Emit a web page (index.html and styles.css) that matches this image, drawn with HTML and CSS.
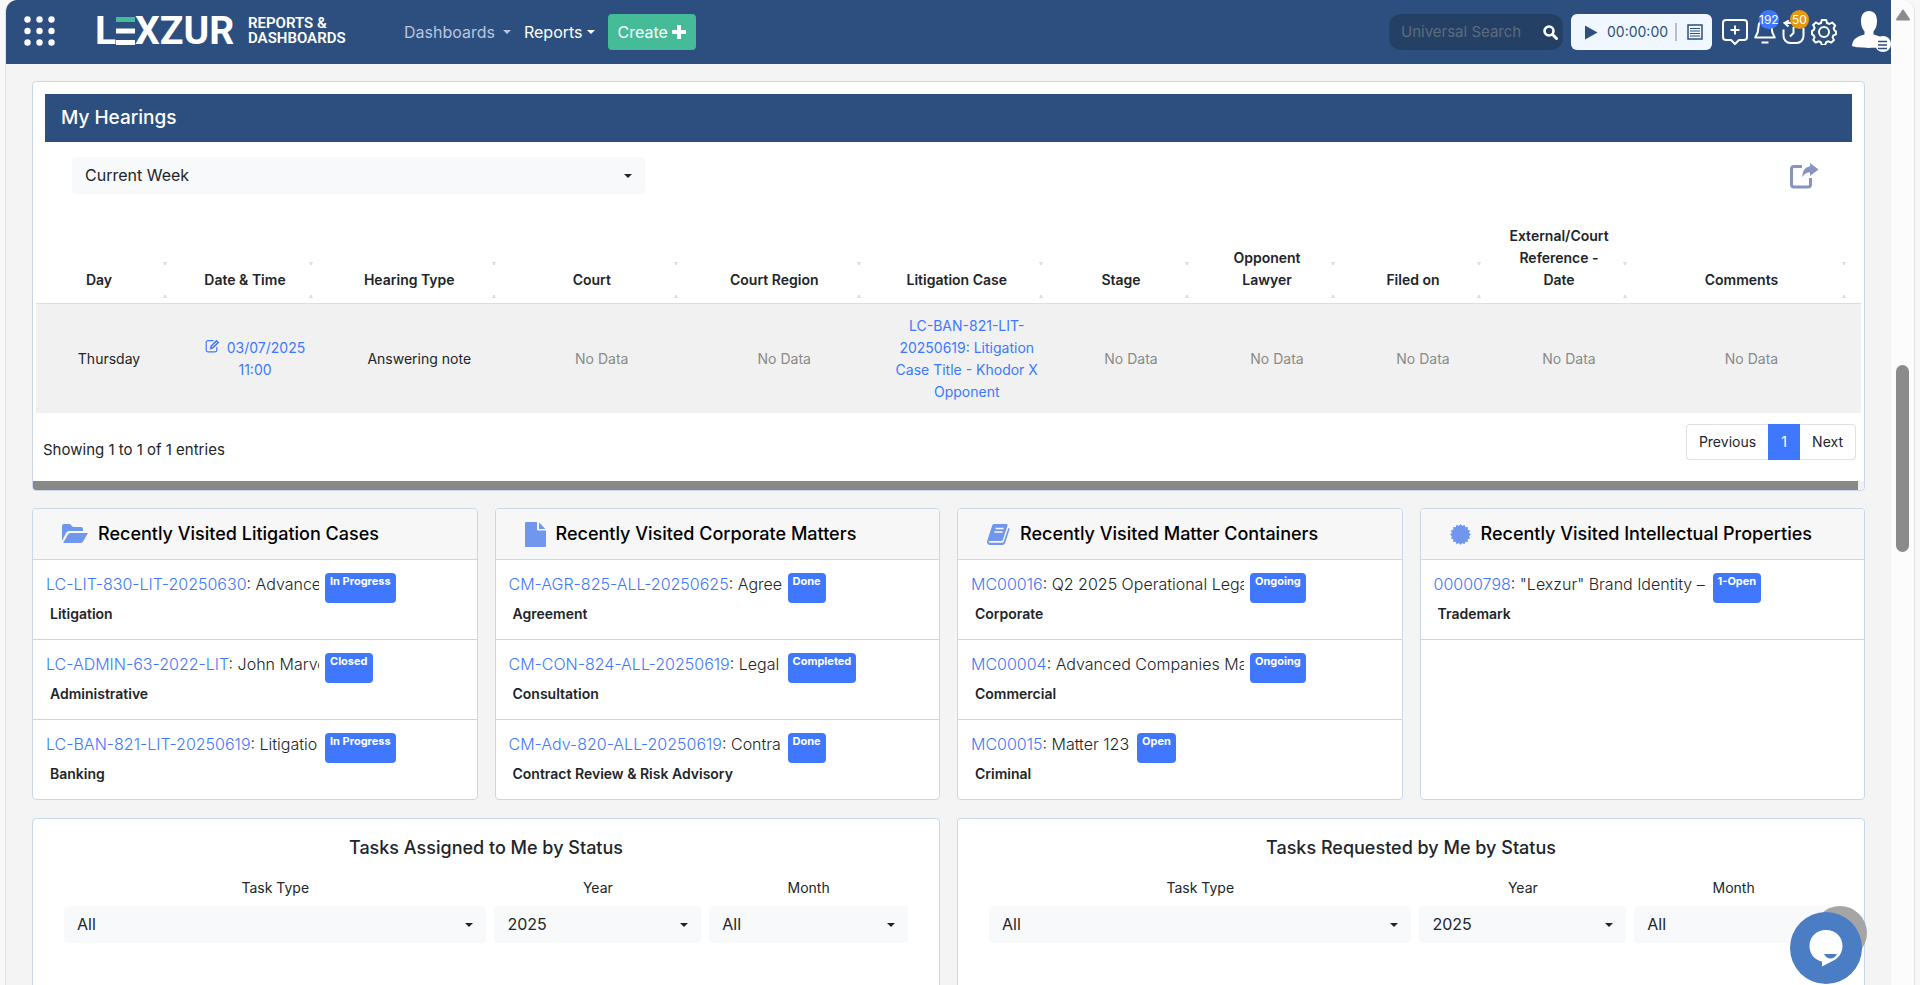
FILE: index.html
```html
<!DOCTYPE html>
<html lang="en">
<head>
<meta charset="utf-8">
<title>Lexzur - Reports &amp; Dashboards</title>
<link rel="stylesheet" href="styles.css">
</head>
<body>
<div class="shell">
  <div class="page">
    <header class="topbar">
      <button class="icon-btn apps" aria-label="Applications">
        <svg width="31" height="30" viewBox="0 0 31 30" fill="#fff"><circle cx="3.500" cy="3.500" r="3.200"/><circle cx="15.500" cy="3.500" r="3.200"/><circle cx="27.500" cy="3.500" r="3.200"/><circle cx="3.500" cy="15" r="3.200"/><circle cx="15.500" cy="15" r="3.200"/><circle cx="27.500" cy="15" r="3.200"/><circle cx="3.500" cy="26.500" r="3.200"/><circle cx="15.500" cy="26.500" r="3.200"/><circle cx="27.500" cy="26.500" r="3.200"/></svg>
      </button>
      <a class="brand" href="#" aria-label="Lexzur">
        <span>L</span>
        <svg width="19" height="28" viewBox="0 0 19 28"><path fill="#46bb97" d="M0 0h19v5H0z"/><path fill="#fff" d="M0 11.500h19v5H0zM0 23h19v5H0z"/></svg>
        <span>XZUR</span>
      </a>
      <div class="product">REPORTS &amp;<br>DASHBOARDS</div>
      <nav class="nav">
        <a class="nav-link muted" href="#">Dashboards <i class="caret"></i></a>
        <a class="nav-link" href="#">Reports<i class="caret"></i></a>
        <button class="create">Create <svg width="14" height="14" viewBox="0 0 14 14"><path d="M7 0v14M0 7h14" stroke="#fff" stroke-width="4"/></svg></button>
      </nav>
      <div class="tools">
        <div class="search">
          <input type="text" placeholder="Universal Search" aria-label="Universal Search">
          <button class="icon-btn" aria-label="Search"><svg width="15" height="15" viewBox="0 0 15 15" fill="none" stroke="#fff"><circle cx="6" cy="6" r="4.500" stroke-width="2.600"/><path d="M9.500 9.500l4 4" stroke-width="3" stroke-linecap="round"/></svg></button>
        </div>
        <div class="timer">
          <button class="icon-btn" aria-label="Start timer"><svg width="14" height="15" viewBox="0 0 14 15"><path d="M1 .5l12.500 7L1 14.500z" fill="#2d4f80"/></svg></button>
          <span class="time">00:00:00</span>
          <span class="divider"></span>
          <button class="icon-btn" aria-label="Time logs"><svg width="16" height="16" viewBox="0 0 16 16" fill="none" stroke="#2d4f80"><path d="M1 1h14v14H1z" stroke-width="1.500"/><path d="M3 4.500h10M3 7h10M3 9.500h10M3 12h10" stroke-width="1.200"/></svg></button>
        </div>
        <div class="actions">
          <button class="icon-btn" aria-label="Add"><svg width="26" height="26" viewBox="0 0 26 26" fill="none" stroke="#fff" stroke-width="2" stroke-linejoin="round"><path d="M4 1h18a3 3 0 0 1 3 3v14a3 3 0 0 1-3 3h-5l-4 4-4-4H4a3 3 0 0 1-3-3V4a3 3 0 0 1 3-3z"/><path d="M13 6.500v9M8.500 11h9"/></svg></button>
          <button class="icon-btn badged" aria-label="Notifications"><svg width="22" height="26" viewBox="0 0 22 26" fill="none" stroke="#fff" stroke-width="2" stroke-linejoin="round"><path d="M11 1C7 1 4.500 4 4.500 8c0 5-1 7-3.300 10.500h19.600C18.500 15 17.500 13 17.500 8c0-4-2.500-7-6.500-7z"/><path d="M7.500 23.500h7"/></svg><span class="count">192</span></button>
          <button class="icon-btn badged" aria-label="Reminders"><svg width="23" height="26" viewBox="0 0 23 26" fill="none" stroke="#fff" stroke-width="2"><path d="M1.500 10.500v6.500a7 7 0 0 0 7 7h6a7 7 0 0 0 7-7V9"/><path d="M11.500 8v6l-3.500 3.500M7 1.500L2.500 4l4 3.500M2.500 4h7"/></svg><span class="count amber">50</span></button>
          <button class="icon-btn" aria-label="Settings"><svg width="26" height="26" viewBox="0 0 26 26" fill="none" stroke="#fff" stroke-width="2" stroke-linejoin="round"><path d="M10.800 1h4.400l.8 3 2.500 1 2.700-1.500 3 3L22.700 9.300l.9 2.400 1.400.7v3l-2.600 1 -.8 2 1.400 2.700-2.700 2.500-2.800-1.300-2.300.9-1 2.700h-3.400l-1-2.700-2.300-.9-2.800 1.300L2.300 21l1.300-2.700-.9-2L1 15.300v-3.500l1.700-.8.9-2.200L2.100 6l2.800-2.600L7.500 5 10 4z"/><circle cx="13" cy="13" r="5"/></svg></button>
          <button class="icon-btn avatar" aria-label="Account"><svg width="39" height="42" viewBox="0 0 39 42"><path fill="#fff" d="M17 0c5 0 8 3.500 8 10 0 5-1.500 8-3.500 10.500v3c7 2 12 4 12.500 11.500-6 2.500-28 2.500-34 0C.5 27.500 5.500 25.500 12.500 23.500v-3C10.500 18 9 15 9 10 9 3.500 12 0 17 0z"/><circle cx="31" cy="33" r="8" fill="#fff"/><path d="M26 30.500h9M26 34h9M26 37.500h9" stroke="#2d4f80" stroke-width="1.300"/></svg></button>
        </div>
      </div>
    </header>

    <main class="content">
      <section class="card hearings">
        <h2 class="banner">My Hearings</h2>
        <div class="filter-row">
          <div class="select wide"><select aria-label="Period"><option>Current Week</option></select></div>
          <button class="icon-btn" aria-label="Export"><svg width="29" height="26" viewBox="0 0 29 26"><path d="M12 3.500H4a2.500 2.500 0 0 0-2.500 2.500V21.500A2.500 2.500 0 0 0 4 24h14a2.500 2.500 0 0 0 2.500-2.500v-6.500" fill="none" stroke="#8794bf" stroke-width="3"/><path d="M20 0l8.500 6.500L20 13V9.500c-4 0-6 1.500-7.500 5C12 8 15 4 20 3.500z" fill="#8794bf"/></svg></button>
        </div>
        <table class="grid">
          <colgroup><col class="w8"><col class="w8"><col class="w10"><col class="w10"><col class="w10"><col class="w10"><col class="w8"><col class="w8"><col class="w8"><col class="w8"><col class="w12"></colgroup>
          <thead><tr><th>Day</th><th>Date &amp; Time</th><th>Hearing Type</th><th>Court</th><th>Court Region</th><th>Litigation Case</th><th>Stage</th><th>Opponent Lawyer</th><th>Filed on</th><th>External/Court Reference - Date</th><th>Comments</th></tr></thead>
          <tbody><tr>
            <td class="strong">Thursday</td>
            <td><a href="#"><svg class="edit" width="14" height="14" viewBox="0 0 14 14" fill="none" stroke="#3f78ff"><path d="M8.500 1.700H3A1.800 1.800 0 0 0 1.200 3.500V11A1.800 1.800 0 0 0 3 12.800h7A1.800 1.800 0 0 0 11.800 11V8" stroke-width="1.200"/><path d="M5.800 9.500l.4-2.300 5.300-5.400 1.700 1.700-5.300 5.300z" stroke-width="1.500"/></svg>03/07/2025 11:00</a></td>
            <td class="strong">Answering note</td><td>No Data</td><td>No Data</td>
            <td><a href="#">LC-BAN-821-LIT-20250619: Litigation Case Title - Khodor X Opponent</a></td>
            <td>No Data</td><td>No Data</td><td>No Data</td><td>No Data</td><td>No Data</td>
          </tr></tbody>
        </table>
        <div class="table-foot">
          <span class="info">Showing 1 to 1 of 1 entries</span>
          <div class="pager"><button>Previous</button><button class="current">1</button><button>Next</button></div>
        </div>
        <div class="hscroll"><div class="hthumb"></div></div>
      </section>

      <div class="recent">
        <section class="card">
          <h3 class="card-head"><svg width="26" height="20" viewBox="0 0 26 20" fill="#7096ee"><path d="M0 17V2a2 2 0 0 1 2-2h6l3 3h8a2 2 0 0 1 2 2v2H8c-2 0-3 .6-4 2z"/><path d="M1 19l5-8.500A3 3 0 0 1 8.500 9H26l-5 8.500a3 3 0 0 1-2.500 1.500z"/></svg>Recently Visited Litigation Cases</h3>
          <div class="item"><div class="line"><span class="name"><a href="#">LC-LIT-830-LIT-20250630</a>: Advance</span><span class="tag">In Progress</span></div><div class="kind">Litigation</div></div>
          <div class="item"><div class="line"><span class="name"><a href="#">LC-ADMIN-63-2022-LIT</a>: John Marve</span><span class="tag">Closed</span></div><div class="kind">Administrative</div></div>
          <div class="item"><div class="line"><span class="name"><a href="#">LC-BAN-821-LIT-20250619</a>: Litigatio</span><span class="tag">In Progress</span></div><div class="kind">Banking</div></div>
        </section>
        <section class="card">
          <h3 class="card-head"><svg width="21" height="25" viewBox="0 0 21 25" fill="#7096ee"><path d="M0 1a1 1 0 0 1 1-1h11v7.500a1 1 0 0 0 1 1h8V24a1 1 0 0 1-1 1H1a1 1 0 0 1-1-1z"/><path d="M14 .5L20.500 7H14z"/></svg>Recently Visited Corporate Matters</h3>
          <div class="item"><div class="line"><span class="name"><a href="#">CM-AGR-825-ALL-20250625</a>: Agreem</span><span class="tag">Done</span></div><div class="kind">Agreement</div></div>
          <div class="item"><div class="line"><span class="name"><a href="#">CM-CON-824-ALL-20250619</a>: Legal</span><span class="tag">Completed</span></div><div class="kind">Consultation</div></div>
          <div class="item"><div class="line"><span class="name"><a href="#">CM-Adv-820-ALL-20250619</a>: Contra</span><span class="tag">Done</span></div><div class="kind">Contract Review &amp; Risk Advisory</div></div>
        </section>
        <section class="card">
          <h3 class="card-head"><svg width="23" height="21" viewBox="0 0 23 21"><path fill="#7096ee" d="M7.500 0H19a1.500 1.500 0 0 1 1.400 2L16 15.500a2 2 0 0 1-2 1.500H3c-1 0-1.500.5-1.300 1 .2.600.8.800 1.500.800h12c.8 0 1.300-.4 1.600-1.200L21.300 4c1.200.3 1.400 1 1 2l-4 12.500c-.5 1.600-1.500 2.500-3 2.500H3c-2 0-3.500-1.800-2.800-4L5 2C5.400.6 6.200 0 7.500 0z"/><path d="M8.500 4.500h8M7.500 8h8" stroke="#f7f7f7" stroke-width="1.300"/></svg>Recently Visited Matter Containers</h3>
          <div class="item"><div class="line"><span class="name"><a href="#">MC00016</a>: Q2 2025 Operational Lega</span><span class="tag">Ongoing</span></div><div class="kind">Corporate</div></div>
          <div class="item"><div class="line"><span class="name"><a href="#">MC00004</a>: Advanced Companies Ma</span><span class="tag">Ongoing</span></div><div class="kind">Commercial</div></div>
          <div class="item"><div class="line"><span class="name short"><a href="#">MC00015</a>: Matter 123</span><span class="tag">Open</span></div><div class="kind">Criminal</div></div>
        </section>
        <section class="card">
          <h3 class="card-head"><svg width="21" height="21" viewBox="-10.500 -10.500 21 21" fill="#7096ee"><path d="M0-10.500L1.700-8.500L4-9.700L4.800-7.200L7.400-7.400L7.200-4.800L9.700-4L8.500-1.700L10.500 0L8.500 1.700L9.700 4L7.200 4.800L7.400 7.400L4.800 7.200L4 9.700L1.700 8.500L0 10.500L-1.700 8.500L-4 9.700L-4.800 7.200L-7.400 7.400L-7.200 4.800L-9.700 4L-8.500 1.700L-10.500 0L-8.500-1.700L-9.700-4L-7.200-4.800L-7.400-7.400L-4.800-7.200L-4-9.700L-1.700-8.500z"/></svg>Recently Visited Intellectual Properties</h3>
          <div class="item ruled"><div class="line"><span class="name"><a href="#">00000798</a>: "Lexzur" Brand Identity –</span><span class="tag">1-Open</span></div><div class="kind">Trademark</div></div>
        </section>
      </div>

      <div class="charts">
        <section class="card chart">
          <h3>Tasks Assigned to Me by Status</h3>
          <div class="filters">
            <label>Task Type<span class="select"><select><option>All</option></select></span></label>
            <label>Year<span class="select"><select><option>2025</option></select></span></label>
            <label>Month<span class="select"><select><option>All</option></select></span></label>
          </div>
        </section>
        <section class="card chart">
          <h3>Tasks Requested by Me by Status</h3>
          <div class="filters">
            <label>Task Type<span class="select"><select><option>All</option></select></span></label>
            <label>Year<span class="select"><select><option>2025</option></select></span></label>
            <label>Month<span class="select"><select><option>All</option></select></span></label>
          </div>
        </section>
      </div>
    </main>
  </div>
  <div class="vscroll"><svg width="16" height="12" viewBox="0 0 16 12"><path d="M8 1.500L14 10.500H2z" fill="#8b8b8b" stroke="#8b8b8b" stroke-width="2" stroke-linejoin="round"/></svg><div class="vthumb"></div></div>
</div>
<span class="to-top"></span>
<button class="chat" aria-label="Chat"><svg width="36" height="38" viewBox="0 0 36 38"><path fill="#fff" d="M18 1c10 0 16.500 7 16.500 16 0 7-4 12-9 14.500L14 37.500v-5C6.500 31 1.500 25 1.500 17 1.500 8 8 1 18 1z"/><path fill="#4b7dc4" d="M16 25h13c-1.500 3-4 4.500-6.500 4.500S17.500 28 16 25z"/></svg></button>
</body>
</html>
```
FILE: styles.css
```css
* { box-sizing: border-box; }
body {
  margin: 0;
  background: #f8f8f8;
  color: #212529;
  font: 400 14px/22px Inter, "Liberation Sans", sans-serif;
  overflow: hidden;
}
button, input, select { font: inherit; color: inherit; }
a { color: #3f78ff; text-decoration: none; }
h2, h3 { margin: 0; font-weight: 500; }
svg { display: block; flex: none; }

.shell {
  display: flex;
  height: 100vh;
  margin: 0 5px;
  border: solid #e2e2e2;
  border-width: 0 1px;
  border-radius: 12px 12px 0 0;
  background: #f4f4f4;
  overflow: hidden;
}
.page { flex: 1; min-width: 0; overflow: hidden; }

.topbar {
  display: flex;
  align-items: center;
  height: 64px;
  padding-left: 18px;
  background: #2d4f80;
  color: #fff;
}
.icon-btn { padding: 0; border: 0; background: none; cursor: pointer; }
.apps { margin: 0 40px 3px 0; }
.brand {
  display: flex;
  align-items: center;
  width: 137px;
  margin-bottom: 3px;
  color: #fff;
  font: 700 39px/40px Roboto, sans-serif;
}
.product {
  width: 99px;
  margin: 0 0 3px 16px;
  white-space: nowrap;
  font: 600 15px/15px Roboto, sans-serif;
}
.nav { display: flex; align-items: center; margin-left: 57px; font-size: 16px; }
.nav-link { display: flex; align-items: center; margin-right: 13px; color: #fff; }
.muted { color: #b9c6dc; }
.muted .caret { margin-left: 8px; }
.caret {
  margin-left: 4px;
  border: solid transparent;
  border-width: 4px 4px 0;
  border-top-color: currentColor;
}
.create {
  display: flex;
  align-items: center;
  gap: 4px;
  height: 36px;
  padding: 0 10px;
  border: 0;
  border-radius: 4px;
  background: #46bb97;
}
.tools { display: flex; align-items: center; gap: 8px; margin-left: auto; }
.search {
  display: flex;
  align-items: center;
  width: 174px;
  height: 36px;
  padding: 0 5px 0 12px;
  border-radius: 12px;
  background: #254065;
}
.search input {
  flex: 1;
  min-width: 0;
  padding: 0;
  border: 0;
  outline: 0;
  background: none;
  font-size: 15px;
}
.search input::placeholder { color: #5c6b7d; opacity: 1; }
.timer {
  display: flex;
  align-items: center;
  width: 141px;
  height: 36px;
  padding: 0 9px 0 13px;
  border-radius: 6px;
  background: #f0f7ff;
  color: #2d4f80;
}
.time { margin: 0 auto 0 9px; }
.divider { width: 2px; height: 18px; margin-right: 10px; background: #afbfdb; }
.actions { display: flex; align-items: center; gap: 6px; margin-left: 2px; }
.badged { position: relative; }
.count {
  position: absolute;
  top: -9px;
  left: 5px;
  min-width: 19px;
  border-radius: 10px;
  background: #3f78ff;
  color: #fff;
  font-size: 12px;
  line-height: 19px;
  text-align: center;
}
.amber { left: 8px; background: #e8990c; }
.avatar { margin-left: 9px; }

.content { padding: 17px 26px 0; }
.card {
  border: 1px solid #c9d7e9;
  border-radius: 4px;
  background: #fff;
  overflow: hidden;
}
.banner {
  margin: 12px 12px 0;
  padding: 0 16px 1px;
  background: #2d4f80;
  color: #fff;
  font-size: 19px;
  line-height: 47px;
}
.filter-row {
  display: flex;
  justify-content: space-between;
  align-items: center;
  margin: 15px 45px 25px 39px;
}
.select { display: grid; align-items: center; }
.select::after {
  content: "";
  grid-area: 1 / 1;
  justify-self: end;
  margin-right: 13px;
  border: solid transparent;
  border-width: 4px 4px 0;
  border-top-color: #212529;
  pointer-events: none;
}
.select select {
  grid-area: 1 / 1;
  width: 100%;
  height: 37px;
  padding: 0 13px 2px;
  border: 0;
  border-radius: 4px;
  appearance: none;
  background: #f8f9fb;
  font-size: 16px;
}
.wide { flex: 0 1 573px; }

.grid {
  width: calc(100% - 6px);
  margin: 0 3px;
  border-collapse: collapse;
  table-layout: fixed;
  text-align: center;
}
.w8 { width: 8%; }
.w10 { width: 10%; }
.w12 { width: 12%; }
.grid th {
  padding: 6px 30px 12px 10px;
  border-bottom: 1px solid #dcdee0;
  font-weight: 600;
  vertical-align: bottom;
  background:
    conic-gradient(from 153deg at 50% 0, #dedede 54deg, transparent 0) right 14px bottom 6px / 8px 5px no-repeat,
    conic-gradient(from -27deg at 50% 100%, #dedede 54deg, transparent 0) right 14px bottom 38px / 8px 5px no-repeat;
}
/* down arrow on top, up arrow below */
.grid th {
  background:
    conic-gradient(from 153deg at 50% 0, #dedede 54deg, transparent 0) right 14px bottom 5px / 6px 4px no-repeat,
    conic-gradient(from -27deg at 50% 100%, #dedede 54deg, transparent 0) right 14px bottom 37px / 6px 4px no-repeat;
}
.grid td { padding: 11px 8px 10px; background: #f1f1f1; color: #8a8a8a; }
.grid td.strong { color: #212529; }
.edit { display: inline-block; margin-right: 8px; }
.table-foot {
  display: flex;
  justify-content: space-between;
  align-items: flex-start;
  padding: 11px 8px 20px 10px;
}
.info { padding-top: 15px; font-size: 15px; }
.pager { display: flex; }
.pager button {
  height: 36px;
  padding: 0 12px;
  border: 1px solid #dee2e6;
  background: #fff;
}
.pager button:first-child { border-right: 0; border-radius: 4px 0 0 4px; }
.pager button:last-child { border-left: 0; border-radius: 0 4px 4px 0; }
.pager .current { width: 32px; border-color: #3f78ff; background: #3f78ff; color: #fff; }
.hscroll { padding-right: 6px; background: #f1f1f1; }
.hthumb { height: 9px; background: #888; }

.recent { display: grid; grid-template-columns: repeat(4, 1fr); gap: 17px; margin: 17px 0 18px; }
.card-head {
  display: flex;
  align-items: center;
  gap: 10px;
  height: 51px;
  padding-left: 29px;
  border-bottom: 1px solid #d3d7dc;
  background: #f7f7f7;
  color: #000;
  font-size: 18px;
}
.item { padding: 13px 14px 14px 13px; }
.item + .item { border-top: 1px solid #c9d7e9; }
.ruled { border-bottom: 1px solid #c9d7e9; }
.line { display: flex; gap: 6px; height: 30px; }
.name {
  width: 273px;
  overflow: hidden;
  white-space: nowrap;
  font-size: 16px;
  font-weight: 300;
}
.short { width: auto; margin-right: 2px; }
.tag {
  height: 30px;
  padding: 0 5px;
  border-radius: 4px;
  background: #3f78ff;
  color: #fff;
  font-size: 11px;
  line-height: 17px;
  font-weight: 700;
}
.kind { padding-left: 4px; font-weight: 600; }

.charts { display: grid; grid-template-columns: 1fr 1fr; gap: 17px; }
.chart { height: 240px; padding: 17px 31px; text-align: center; }
.chart h3 { font-size: 18px; line-height: 24px; }
.filters { display: grid; grid-template-columns: 423fr 207fr 199fr; gap: 8px; margin-top: 17px; }
.filters label { display: grid; gap: 7px; }

.vscroll {
  display: flex;
  flex-direction: column;
  align-items: center;
  width: 23px;
  padding-top: 9px;
  background: #fcfcfc;
}
.vthumb { width: 13px; height: 19vh; margin-top: 344px; border-radius: 7px; background: #8b8b8b; }

.to-top {
  position: fixed;
  right: 53px;
  bottom: 25px;
  width: 54px;
  height: 54px;
  border-radius: 50%;
  background: #a5a5a5;
}
.chat {
  position: fixed;
  right: 58px;
  bottom: 1px;
  display: grid;
  place-items: center;
  width: 72px;
  height: 72px;
  padding: 0;
  border: 0;
  border-radius: 50%;
  background: #4b7dc4;
}
```
